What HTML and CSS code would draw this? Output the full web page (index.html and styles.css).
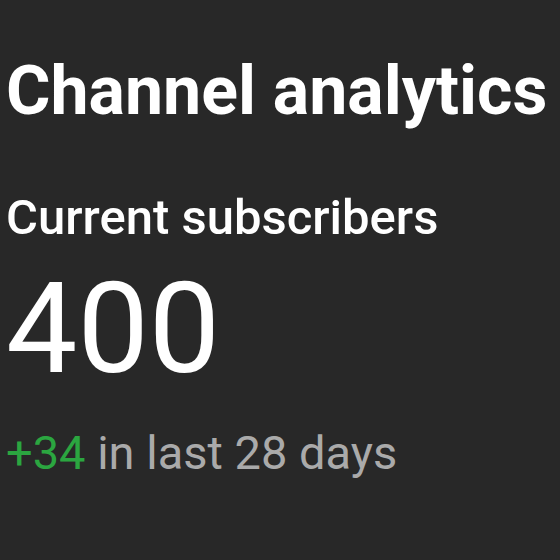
FILE: index.html
```html
<!doctype html>
<html lang="en">
<head>
  <meta charset="UTF-8">
  <meta name="viewport" content="width=device-width, initial-scale=1.0">
  <title>Channel analytics</title>
  <link rel="stylesheet" href="styles.css">
</head>
<body>

<div class="card">
  <h1>Channel analytics</h1>
  <h2>Current subscribers</h2>
  <div class="count">400</div>
  <p class="change"><span class="up">+34</span> in last 28 days</p>
</div>

</body>
</html>
```

FILE: styles.css
```css
body {
  margin: 0;
  background-color: #282828;
  font-family: Roboto, 'Noto Sans', sans-serif;
  color: #ffffff;
}

.card {
  padding: 51px 0 0 6px;
  white-space: nowrap;
}

h1 {
  margin: 0;
  font-size: 68px;
  font-weight: 700;
  line-height: 1.2;
}

h2 {
  margin: 56px 0 0;
  font-size: 49px;
  font-weight: 500;
  line-height: 1.2;
}

.count {
  margin-top: 6px;
  font-size: 127px;
  line-height: 1.2;
}

.change {
  margin: 19px 0 0;
  font-size: 47px;
  color: #aaaaaa;
  line-height: 1.2;
}

.change .up {
  color: #2ba640;
}
```
